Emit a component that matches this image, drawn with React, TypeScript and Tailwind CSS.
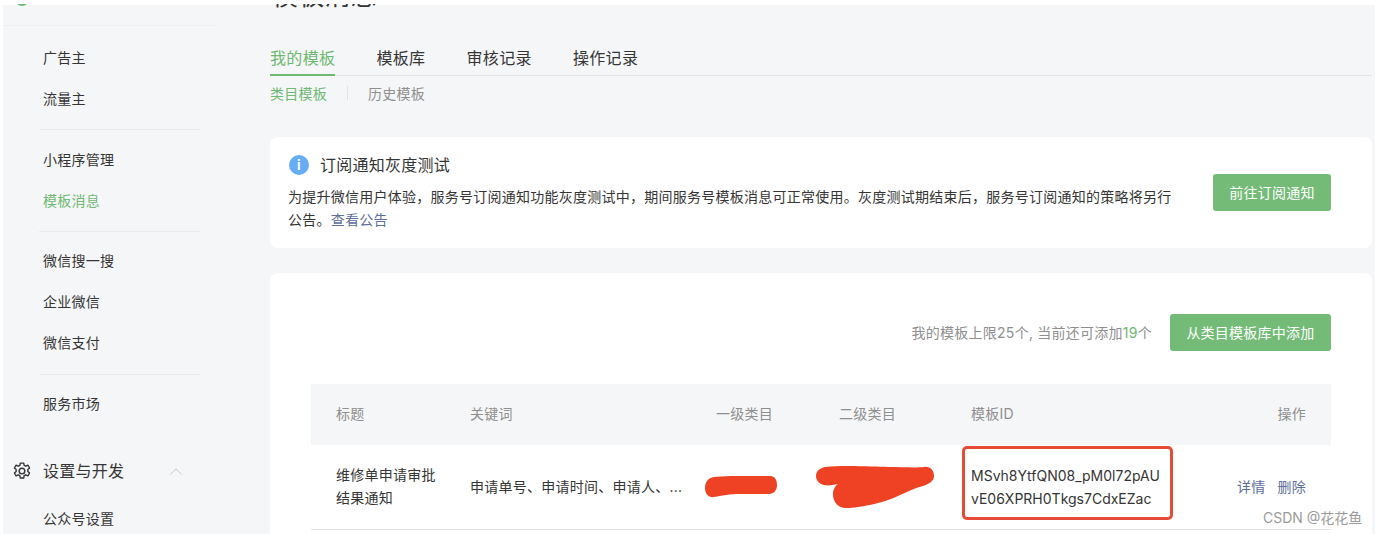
const sans = "font-['Inter','Noto_Sans_CJK_SC',sans-serif]";

function Divider({ wide }: { wide?: boolean }) {
  return <div className={wide ? "h-px w-[213px] bg-[#eeeff1]" : "ml-[36px] h-px w-[161px] bg-[#eaebed]"} />;
}

function MenuItem({ label, active }: { label: string; active?: boolean }) {
  return (
    <div className={`flex h-[41px] items-center pl-[40px] text-[14px] ${active ? "text-[#6fb972]" : "text-[#353535]"}`}>
      {label}
    </div>
  );
}

function Sidebar() {
  return (
    <aside className="w-[267px] shrink-0">
      <div className="mt-[20px]">
        <Divider wide />
      </div>
      <div className="mt-[11px]">
        <MenuItem label="广告主" />
        <MenuItem label="流量主" />
      </div>
      <div className="mt-[10px]">
        <Divider />
      </div>
      <div className="mt-[9px]">
        <MenuItem label="小程序管理" />
        <MenuItem label="模板消息" active />
      </div>
      <div className="mt-[10px]">
        <Divider />
      </div>
      <div className="mt-[8px]">
        <MenuItem label="微信搜一搜" />
        <MenuItem label="企业微信" />
        <MenuItem label="微信支付" />
      </div>
      <div className="mt-[11px]">
        <Divider />
      </div>
      <div className="mt-[8px]">
        <MenuItem label="服务市场" />
      </div>
      <div className="mt-[35px] flex h-[24px] items-center text-[16px] text-[#353535]">
        <svg viewBox="0 0 24 24" className="ml-[9px] size-[20px]" fill="none" stroke="currentColor" strokeWidth="1.7" strokeLinejoin="round">
          <path d="M10 2.500h4l.6 2.800 1.900.9 2.600-1.200 2 3.400-2.100 1.900v2.200l2.100 1.900-2 3.400-2.600-1.200-1.900 1-.6 2.800h-4l-.6-2.800-1.900-1-2.600 1.200-2-3.400 2.100-1.900v-2.200L2.900 8.400l2-3.400 2.600 1.200 1.900-.9z" />
          <circle cx="12" cy="12" r="3.400" />
        </svg>
        <span className="ml-[11px]">设置与开发</span>
        <svg viewBox="0 0 14 8" className="ml-[45px] h-[7px] w-[14px]" fill="none" stroke="#c4c4c4" strokeWidth="1">
          <path d="M.5 7.500 7 1l6.500 6.500" />
        </svg>
      </div>
      <div className="mt-[15px]">
        <MenuItem label="公众号设置" />
      </div>
    </aside>
  );
}

function Tabs() {
  return (
    <div className="mt-[30px] flex h-[41px] gap-[41px] border-b border-[#e2e3e5] text-[16px] tracking-[0.35px] text-[#353535]">
      <div className="h-[41px] border-b-2 border-[#6fb972] pt-[11px] text-[#6fb972]">我的模板</div>
      <div className="pt-[11px]">模板库</div>
      <div className="pt-[11px]">审核记录</div>
      <div className="pt-[11px]">操作记录</div>
    </div>
  );
}

function Notice() {
  return (
    <section className="mt-[34px] flex h-[111px] rounded-[8px] bg-white pl-[18px] pr-[41px]">
      <div className="flex-1 pt-[17px]">
        <div className="flex h-[22px] items-center gap-[11px] text-[16px] text-[#353535]">
          <div className="ml-px flex size-[20px] items-center justify-center rounded-full bg-[#66adf5] text-[13px] font-bold leading-none text-white">
            i
          </div>
          订阅通知灰度测试
        </div>
        <p className="mt-[9px] w-[895px] text-[14px] leading-[23px] text-[#353535]">
          为提升微信用户体验，服务号订阅通知功能灰度测试中，期间服务号模板消息可正常使用。灰度测试期结束后，服务号订阅通知的策略将另行公告。
          <span className="text-[#5d6f9b]">查看公告</span>
        </p>
      </div>
      <button type="button" className="mt-[37px] h-[37px] w-[118px] rounded-[3px] bg-[#74bb77] text-[14px] text-white">
        前往订阅通知
      </button>
    </section>
  );
}

function TableHeader() {
  return (
    <div className="flex h-[61px] items-center bg-[#f5f6f8] pb-[2px] text-[14px] text-[#8f8f8f]">
      <div className="w-[159px] pl-[25px]">标题</div>
      <div className="w-[246px]">关键词</div>
      <div className="w-[123px]">一级类目</div>
      <div className="w-[132px]">二级类目</div>
      <div className="w-[240px]">模板ID</div>
      <div className="flex-1 pr-[25px] text-right">操作</div>
    </div>
  );
}

function TableRow() {
  return (
    <div className="flex h-[85px] items-center border-b border-[#e2e3e5] text-[14px] text-[#353535]">
      <div className="w-[159px] pb-[3px] pl-[25px] pr-[26px] leading-[23px]">维修单申请审批结果通知</div>
      <div className="w-[246px] pb-[2px]">申请单号、申请时间、申请人、...</div>
      <div className="w-[123px]">
        <svg viewBox="0 0 74 22" className="ml-[-12px] h-[22px] w-[74px]" fill="#ef4224">
          <path d="M10 1C30-1 60 0 66 0c5 0 7 4 7 9s-3 9-8 9H32C24 18 12 21 10 21 4 22 1 17 1 12 1 6 4 2 10 1Z" />
        </svg>
      </div>
      <div className="w-[132px]">
        <svg viewBox="0 0 118 42" className="ml-[-23px] h-[42px] w-[118px]" fill="#ef4224">
          <path d="M9 1C30-1 60 1 72 1c12 0 28 1 36 0 6-1 10 3 10 9 0 5-5 8-11 10-12 3-22 9-32 13-8 3-30 9-45 9-8 0-13-6-13-14 0-5 3-9 5-10-5 1-10 2-14 1C3 18 0 14 0 10 0 5 4 2 9 1Z" />
        </svg>
      </div>
      <div className="w-[240px] self-start pt-px">
        <div className="ml-[-9px] h-[74px] w-[211px] rounded-[5px] border-[3px] border-[#e64c35] pl-[6px] pt-[15px] text-[14px] leading-[23px] tracking-normal">
          MSvh8YtfQN08_pM0l72pAU
          <br />
          vE06XPRH0Tkgs7CdxEZac
        </div>
      </div>
      <div className="flex flex-1 justify-end gap-[12px] pb-[2px] pr-[25px] text-[#5d6f9b]">
        <span>详情</span>
        <span>删除</span>
      </div>
    </div>
  );
}

function TemplateCard() {
  return (
    <section className="mt-[25px] h-[400px] rounded-[8px] bg-white px-[41px] pt-[41px]">
      <div className="flex h-[37px] items-center justify-end text-[14px] text-[#8f8f8f]">
        <span>
          我的模板上限25个, 当前还可添加<span className="text-[#6fb972]">19</span>个
        </span>
        <button type="button" className="ml-[18px] h-[37px] w-[161px] rounded-[3px] bg-[#74bb77] text-[14px] text-white">
          从类目模板库中添加
        </button>
      </div>
      <div className="mt-[33px]">
        <TableHeader />
        <TableRow />
      </div>
    </section>
  );
}

export default function App() {
  return (
    <div className={`relative h-[534px] w-[1378px] overflow-hidden bg-white pl-[3px] pt-[5px] tracking-[0.25px] ${sans}`}>
      <div className="flex h-[529px] w-[1372px] bg-[#f5f6f8]">
        <Sidebar />
        <main className="min-w-0 flex-1 pr-[3px]">
          <Tabs />
          <div className="mt-[7px] flex h-[20px] items-center text-[14px]">
            <span className="text-[#6fb972]">类目模板</span>
            <span className="mx-[20px] h-[14px] w-px bg-[#e2e3e5]" />
            <span className="text-[#8f8f8f]">历史模板</span>
          </div>
          <Notice />
          <TemplateCard />
        </main>
      </div>
      <div className="absolute left-[15px] top-[-8px] size-[14px] rounded-full bg-[#6fb972]" />
      <div className="absolute left-[272px] top-[-24px] text-[26px] text-[#353535]">模板消息</div>
      <div className="absolute inset-x-0 top-0 h-[4px] bg-white" />
      <div className="absolute left-[1263px] top-[507px] text-[14px] tracking-normal text-[#9b9b9b]">CSDN @花花鱼</div>
    </div>
  );
}
